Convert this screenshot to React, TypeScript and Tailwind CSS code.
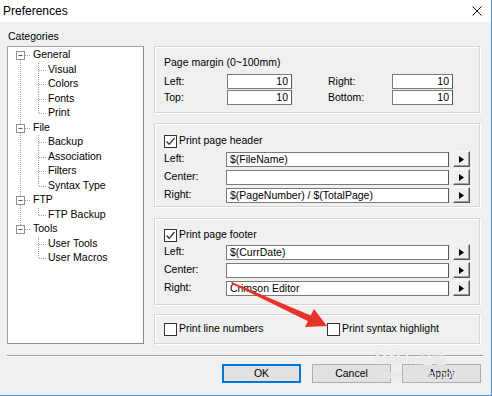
import React from 'react';

const font = { fontFamily: '"Liberation Sans", Arial, sans-serif' };

type Node = { label: string; children?: string[] };

const tree: Node[] = [
    { label: 'General', children: ['Visual', 'Colors', 'Fonts', 'Print'] },
    { label: 'File', children: ['Backup', 'Association', 'Filters', 'Syntax Type'] },
    { label: 'FTP', children: ['FTP Backup'] },
    { label: 'Tools', children: ['User Tools', 'User Macros'] },
];

const dot = { stroke: '#a0a0a0', strokeWidth: 1, strokeDasharray: '1 1' };

const ParentLines: React.FC<{ first: boolean; last: boolean }> = ({ first, last }) => (
    <svg width="24" height="14.5" className="shrink-0">
        {!first && <line x1="12.5" y1="0" x2="12.5" y2="3" {...dot} />}
        {!last && <line x1="12.5" y1="12" x2="12.5" y2="14.5" {...dot} />}
        <rect x="8.5" y="3.5" width="8" height="8" fill="#fff" stroke="#919191" />
        <line x1="10.5" y1="7.5" x2="14.5" y2="7.5" stroke="#3060a0" />
        <line x1="17" y1="7.5" x2="23" y2="7.5" {...dot} />
    </svg>
);

const ChildLines: React.FC<{ outer: boolean; lastChild: boolean }> = ({ outer, lastChild }) => (
    <svg width="40" height="14.5" className="shrink-0">
        {outer && <line x1="12.5" y1="0" x2="12.5" y2="14.5" {...dot} />}
        <line x1="30.5" y1="0" x2="30.5" y2={lastChild ? 7.5 : 14.5} {...dot} />
        <line x1="31" y1="7.5" x2="39" y2="7.5" {...dot} />
    </svg>
);

const Check: React.FC<{ checked?: boolean }> = ({ checked }) => (
    <span className="w-[13px] h-[13px] border border-[#333] bg-white flex items-center justify-center shrink-0">
        {checked && (
            <svg width="11" height="11" viewBox="0 0 11 11">
                <path d="M1.5 5.5 L4.2 8.3 L9.5 2" fill="none" stroke="#333" strokeWidth="1.3" />
            </svg>
        )}
    </span>
);

const Field: React.FC<{ value?: string; right?: boolean; w: string }> = ({ value, right, w }) => (
    <div
        className={`${w} h-[15px] bg-white border border-[#7a7a7a] border-r-[#555] flex items-center px-[3px] text-[10.5px] text-black leading-none ${right ? 'justify-end' : ''}`}
    >
        {value}
    </div>
);

const ArrowBtn: React.FC = () => (
    <div className="w-[17px] h-[16px] bg-[#f0f0f0] border border-[#f8f8f8] border-r-[#555] border-b-[#555] shadow-[inset_-1px_-1px_0_#a0a0a0] flex items-center justify-center">
        <svg width="5" height="7" viewBox="0 0 5 7">
            <path d="M0 0 L5 3.5 L0 7 Z" fill="#000" />
        </svg>
    </div>
);

const Group: React.FC<{ className?: string; children: React.ReactNode }> = ({ className, children }) => (
    <div className={`border border-[#d5d5d5] shadow-[inset_1px_1px_0_#fff,1px_1px_0_#fff] px-[9px] ${className ?? ''}`}>
        {children}
    </div>
);

const TextRow: React.FC<{ label: string; value?: string }> = ({ label, value }) => (
    <div className="flex items-center h-[18px]">
        <span className="w-[63px]">{label}</span>
        <Field w="w-[227px]" value={value} />
        <span className="w-[4px]" />
        <ArrowBtn />
    </div>
);

const Button: React.FC<{ label: string; primary?: boolean }> = ({ label, primary }) => (
    <div
        className={`w-[79px] h-[19px] bg-[#e1e1e1] flex items-center justify-center text-[10.5px] ${primary ? 'border-2 border-[#0078d7]' : 'border border-[#adadad]'}`}
    >
        {label}
    </div>
);

export default function App() {
    return (
        <div style={font} className="relative w-[492px] h-[396px] bg-[#f0f0f0] border-r border-b border-[#4a90d9] text-black overflow-hidden">
            <div className="h-[22px] bg-white flex items-center justify-between pl-[3px] pr-[8px]">
                <span className="text-[12px]">Preferences</span>
                <svg width="10" height="10" viewBox="0 0 10 10" className="mr-[1px]">
                    <path d="M0.5 0.5 L9.5 9.5 M9.5 0.5 L0.5 9.5" stroke="#111" strokeWidth="1" />
                </svg>
            </div>

            <div className="flex px-[7px] text-[10.5px]">
                <div className="w-[137px] pt-[8px]">
                    <div className="h-[16px] leading-[12px] pl-[1px]">Categories</div>
                    <div className="h-[298px] bg-white border border-[#a0a0a0] border-r-[#8a8a8a] border-b-[#8a8a8a] pt-[1px]">
                        {tree.map((node, i) => (
                            <div key={node.label}>
                                <div className="flex items-center h-[14.5px]">
                                    <ParentLines first={i === 0} last={i === tree.length - 1} />
                                    <span className="pl-[1px]">{node.label}</span>
                                </div>
                                {node.children?.map((c, j) => (
                                    <div key={c} className="flex items-center h-[14.5px]">
                                        <ChildLines outer={i !== tree.length - 1} lastChild={j === node.children!.length - 1} />
                                        <span>{c}</span>
                                    </div>
                                ))}
                            </div>
                        ))}
                    </div>
                </div>

                <div className="ml-[10px] w-[326px] pt-[24px]">
                    <Group className="h-[67px] pt-[8px]">
                        <div className="h-[15px] leading-[15px]">Page margin (0~100mm)</div>
                        <div className="flex items-center h-[15px] mt-[4px]">
                            <span className="w-[63px]">Left:</span>
                            <Field w="w-[65px]" value="10" right />
                            <span className="w-[36px]" />
                            <span className="w-[64px]">Right:</span>
                            <Field w="w-[61px]" value="10" right />
                        </div>
                        <div className="flex items-center h-[15px] mt-[1px]">
                            <span className="w-[63px]">Top:</span>
                            <Field w="w-[65px]" value="10" right />
                            <span className="w-[36px]" />
                            <span className="w-[64px]">Bottom:</span>
                            <Field w="w-[61px]" value="10" right />
                        </div>
                    </Group>

                    <Group className="mt-[10px] h-[84px] pt-[10px]">
                        <div className="flex items-center gap-[2px] h-[14px]">
                            <Check checked />
                            <span>Print page header</span>
                        </div>
                        <div className="mt-[2px]">
                            <TextRow label="Left:" value="$(FileName)" />
                            <TextRow label="Center:" />
                            <TextRow label="Right:" value="$(PageNumber) / $(TotalPage)" />
                        </div>
                    </Group>

                    <Group className="mt-[11px] h-[87px] pt-[9px]">
                        <div className="flex items-center gap-[2px] h-[14px]">
                            <Check checked />
                            <span>Print page footer</span>
                        </div>
                        <div className="mt-[1px]">
                            <TextRow label="Left:" value="$(CurrDate)" />
                            <TextRow label="Center:" />
                            <TextRow label="Right:" value="Crimson Editor" />
                        </div>
                    </Group>

                    <Group className="mt-[9px] h-[30px] flex items-center">
                        <div className="flex items-center gap-[2px] w-[163px]">
                            <Check />
                            <span>Print line numbers</span>
                        </div>
                        <div className="flex items-center gap-[2px]">
                            <Check />
                            <span>Print syntax highlight</span>
                        </div>
                    </Group>
                </div>
            </div>

            <div className="ml-[7px] mr-[8px] mt-[11px] border-t border-[#a0a0a0] shadow-[0_1px_0_#fff]" />

            <div className="flex justify-end gap-[11px] pr-[10px] mt-[8px]">
                <Button label="OK" primary />
                <Button label="Cancel" />
                <Button label="Apply" />
            </div>

            {/* annotation arrow */}
            <svg className="absolute left-0 top-0 pointer-events-none" width="492" height="396">
                <path d="M232 283 L311 316.5 L309.5 321 Z" fill="#e8332b" stroke="#e8332b" strokeWidth="1.5" strokeLinejoin="round" />
                <path d="M327 326 L305 327 L314 309 Z" fill="#e8332b" />
            </svg>

            {/* watermark */}
            <div className="absolute left-[375px] top-[350px] pointer-events-none text-white/80 [text-shadow:0_0_1px_#b8b8b8] leading-none">
                <div className="text-[17px] font-bold tracking-tight" style={{ fontFamily: '"Liberation Sans", "Noto Sans CJK SC", sans-serif' }}>
                    Bai<span className="text-[14px]">du</span>
                    <span className="text-[14px] font-normal ml-[2px]">经验</span>
                </div>
                <div className="text-[10px] mt-[3px] tracking-wide">jingyan.baidu.com</div>
            </div>
        </div>
    );
}
